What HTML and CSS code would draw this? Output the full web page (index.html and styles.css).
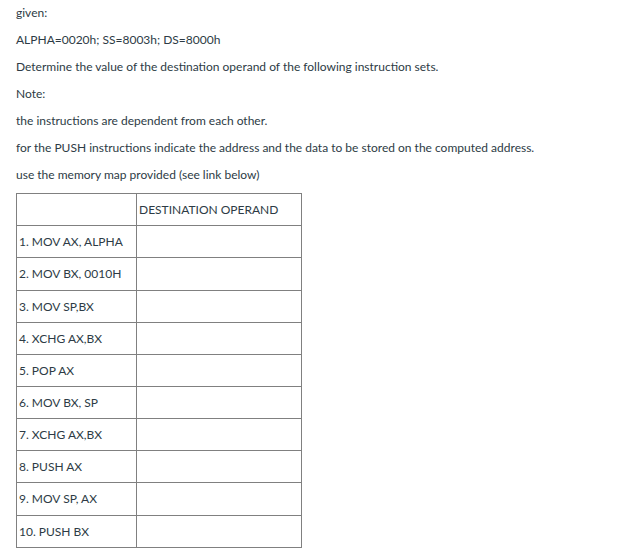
FILE: index.html
```
<!DOCTYPE html>
<html>
<head>
<meta charset="utf-8">
<link rel="stylesheet" href="styles.css">
</head>
<body>
<div class="content">
<p>given:</p>
<p>ALPHA=0020h; SS=8003h; DS=8000h</p>
<p>Determine the value of the destination operand of the following instruction sets.</p>
<p>Note:</p>
<p>the instructions are dependent from each other.</p>
<p>for the PUSH instructions indicate the address and the data to be stored on the computed address.</p>
<p>use the memory map provided (see link below)</p>
<table class="grid">
<tr><td class="c1"></td><td class="c2">DESTINATION OPERAND</td></tr>
<tr><td class="c1">1. MOV AX, ALPHA</td><td class="c2"></td></tr>
<tr class="tall"><td class="c1">2. MOV BX, 0010H</td><td class="c2"></td></tr>
<tr><td class="c1">3. MOV SP,BX</td><td class="c2"></td></tr>
<tr><td class="c1">4. XCHG AX,BX</td><td class="c2"></td></tr>
<tr><td class="c1">5. POP AX</td><td class="c2"></td></tr>
<tr><td class="c1">6. MOV BX, SP</td><td class="c2"></td></tr>
<tr><td class="c1">7. XCHG AX,BX</td><td class="c2"></td></tr>
<tr><td class="c1">8. PUSH AX</td><td class="c2"></td></tr>
<tr class="tall"><td class="c1">9. MOV SP, AX</td><td class="c2"></td></tr>
<tr><td class="c1">10. PUSH BX</td><td class="c2"></td></tr>
</table>
</div>
</body>
</html>
```
FILE: styles.css
```
html, body {
  margin: 0;
  padding: 0;
  background: #ffffff;
}
body {
  font-family: Lato, "Liberation Sans", sans-serif;
  font-size: 12px;
  color: #2d3b45;
}
.content {
  padding: 4px 16px 0 16px;
}
.content p {
  margin: 0 0 9px 0;
  line-height: 18px;
}
.grid {
  border-collapse: collapse;
  margin-top: 7px;
}
.grid td {
  border: 1px solid #808080;
  height: 32px;
  padding: 0 2px;
  box-sizing: border-box;
  vertical-align: middle;
  line-height: 16px;
}
.grid tr.tall td {
  height: 33px;
}
.c1 { width: 120px; }
.c2 { width: 165px; }
```
